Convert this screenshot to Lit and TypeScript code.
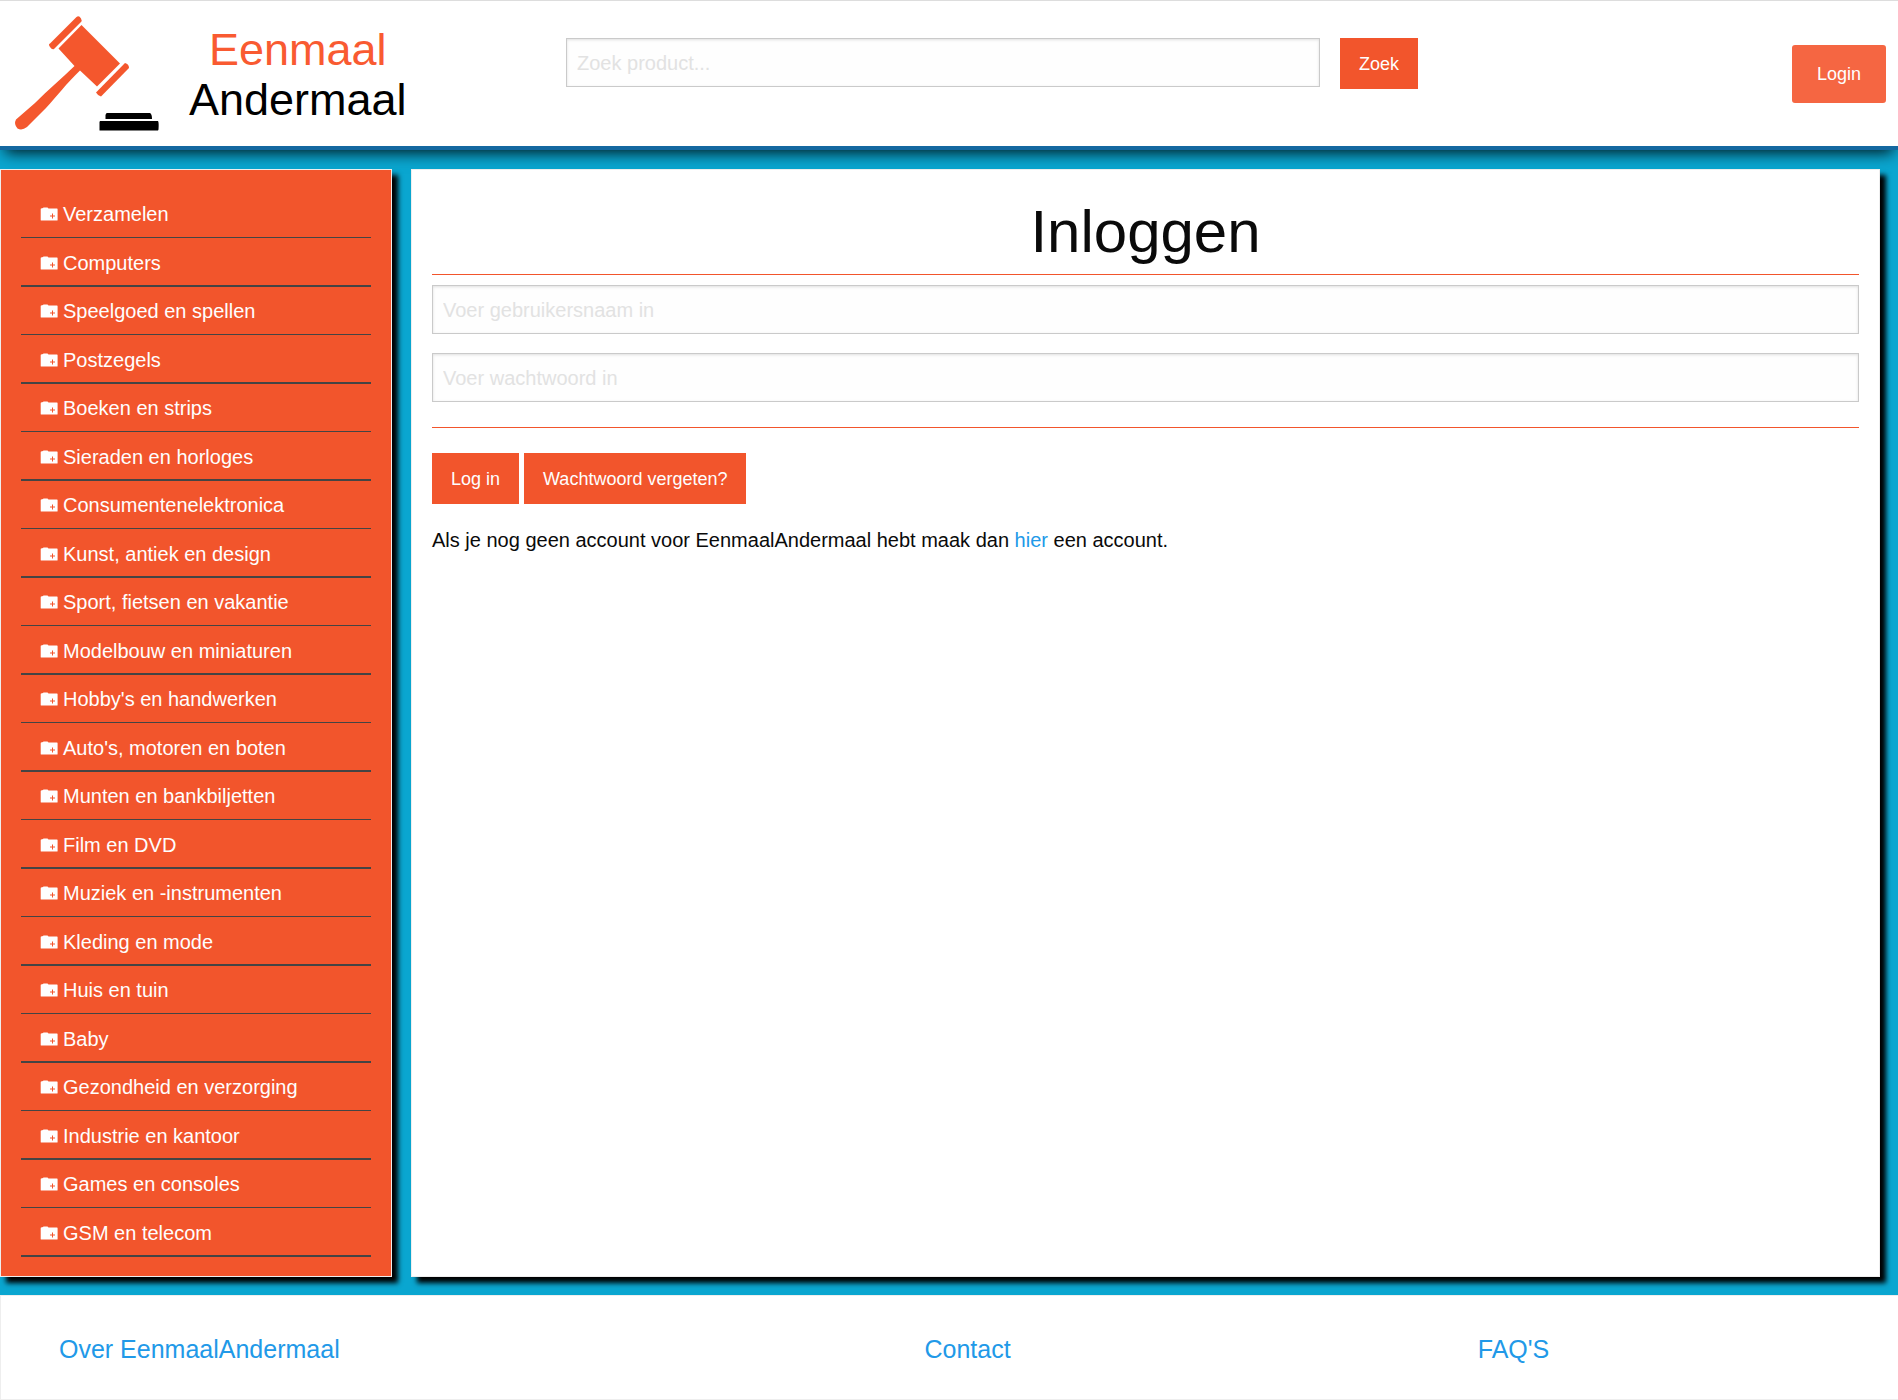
import { LitElement, html, css } from "lit";
import { customElement } from "lit/decorators.js";

const categories = [
  "Verzamelen", "Computers", "Speelgoed en spellen", "Postzegels", "Boeken en strips",
  "Sieraden en horloges", "Consumentenelektronica", "Kunst, antiek en design",
  "Sport, fietsen en vakantie", "Modelbouw en miniaturen", "Hobby's en handwerken",
  "Auto's, motoren en boten", "Munten en bankbiljetten", "Film en DVD",
  "Muziek en -instrumenten", "Kleding en mode", "Huis en tuin", "Baby",
  "Gezondheid en verzorging", "Industrie en kantoor", "Games en consoles", "GSM en telecom",
];

@customElement("app-root")
export class AppRoot extends LitElement {
  static styles = css`
    :host {
      display: flex;
      flex-direction: column;
      min-height: 100vh;
      box-sizing: border-box;
      background: #0aa6d0;
      color: #0a0a0a;
      font-family: "Liberation Sans", Arial, sans-serif;
      font-size: 20px;
      line-height: 30px;
    }
    * { box-sizing: border-box; }
    a { color: #2199e8; text-decoration: none; }

    .header {
      display: grid;
      grid-template-columns: 566fr 852fr 480fr;
      align-items: start;
      background: #fff;
      border-top: 1px solid #ddd;
      border-bottom: 4px solid #1468a0;
      box-shadow: 0 8px 14px -5px rgba(0, 0, 0, 0.85);
    }
    .brand { display: flex; align-items: flex-start; color: #000; }
    .logo { display: block; width: 165px; height: 145px; flex: none; }
    .brand-name {
      margin: 24px 0 0 24px;
      font-size: 45px;
      line-height: 50px;
      text-align: center;
    }
    .brand-name span { display: block; }
    .brand-name .accent { color: #f95a31; }
    .search { display: flex; align-items: flex-start; gap: 20px; padding-top: 37px; }
    .field {
      display: block;
      width: 100%;
      height: 49px;
      margin: 0;
      padding: 1px 10px 0;
      border: 1px solid #cacaca;
      border-radius: 0;
      background: #fefefe;
      box-shadow: inset 0 1px 3px rgba(10, 10, 10, 0.12);
      font: inherit;
      color: #0a0a0a;
    }
    .field::placeholder { color: #e2e2e2; opacity: 1; }
    .search .field { flex: 1; min-width: 0; }
    .button {
      display: block;
      flex: none;
      height: 51px;
      margin: 0;
      padding: 1px 19px 0;
      border: 0;
      background: #f2552c;
      color: #fefefe;
      font: inherit;
      font-size: 18px;
      cursor: pointer;
    }
    .login {
      justify-self: end;
      margin: 41px 9px 0 0;
      width: 100px;
      height: 64px;
      padding: 0;
      border: 3px solid #fff;
      border-radius: 6px;
      background: #f56642;
      color: #fefefe;
      font: inherit;
      font-size: 18px;
      cursor: pointer;
    }

    .body {
      flex: 1;
      display: grid;
      grid-template-columns: 392fr 1469fr;
      gap: 19px;
      padding: 19px 18px 18px 0;
    }
    .panel {
      border: 1px solid #eee;
      box-shadow: 6px 6px 5px #000;
    }
    .sidebar { background: #f2552c; padding: 20px 20px 19px; }
    .categories { list-style: none; margin: 0; padding: 0; }
    .category { border-bottom: 1px solid #444; }
    .category:nth-child(even) { border-bottom-width: 2px; }
    .category a {
      display: flex;
      align-items: center;
      gap: 5px;
      height: 47px;
      padding-left: 19px;
      color: #fefefe;
    }
    .category:nth-child(even) a { padding-top: 2px; }
    .folder { width: 18px; height: 14px; flex: none; }

    .main { background: #fff; padding: 20px; }
    .title {
      margin: 0;
      padding-top: 6px;
      height: 85px;
      border-bottom: 1px solid #f2552c;
      font-size: 60px;
      line-height: 72px;
      font-weight: normal;
      text-align: center;
    }
    .fields {
      display: grid;
      gap: 19px;
      padding: 10px 0 25px;
      border-bottom: 1px solid #f2552c;
    }
    .actions { display: flex; gap: 5px; margin-top: 25px; }
    .hint { margin: 21px 0 0; }

    .footer {
      display: grid;
      grid-template-columns: 865fr 553fr 420fr;
      align-items: center;
      height: 105px;
      padding: 2px 0 0 58px;
      background: #fff;
      border: 1px solid #eee;
      border-right: 0;
      font-size: 25px;
    }
  `;

  private folderIcon() {
    return html`<svg class="folder" viewBox="0 0 18 14" aria-hidden="true">
      <path fill="#fefefe" fill-rule="evenodd" d="M1 1.5 3 1 3.500 0.500H7.500L8.500 1.500H17Q17.600 1.500 17.600 2.200V13Q17.600 13.600 17 13.600H1.400Q0.700 13.600 0.700 13V2Z M12 6.500V8.500H10V9.500H12V11.500H13V9.500H15V8.500H13V6.500Z"/>
    </svg>`;
  }

  render() {
    return html`
      <header class="header">
        <a class="brand" href="#">
          <svg class="logo" viewBox="0 0 165 145" aria-hidden="true">
            <g fill="#f4572d">
              <path d="M81.500 24 120 62.500 97 85.500 80 69.500C66 83 58 94 46 107L27 126Q22 130 17.500 127.500Q13.500 123 16 118.500L35 102C48 89 61 78 74.500 65L58.500 47.500Z"/>
              <path d="M76.500 16Q79 14 81 17.500Q82.500 19.500 80.500 21.500L54 48Q52 49 50 46T50 42.500Z"/>
              <path d="M125 62Q129 63 129 67L101 95.500Q98 95 96 91.500Z"/>
            </g>
            <path d="M107 112H150Q152 113 152 118H105.500V114Q106 112 107 112ZM100 120H158Q159 121 158.500 128.500L158 129.500H99.500V121Z"/>
          </svg>
          <span class="brand-name"><span class="accent">Eenmaal</span><span>Andermaal</span></span>
        </a>
        <form class="search" role="search" @submit=${(e: Event) => e.preventDefault()}>
          <input class="field" id="search" type="text" aria-label="Zoek product" placeholder="Zoek product..." />
          <button class="button" type="submit">Zoek</button>
        </form>
        <button class="login" type="button">Login</button>
      </header>
      <div class="body">
        <nav class="panel sidebar">
          <ul class="categories">
            ${categories.map((c) => html`<li class="category"><a href="#">${this.folderIcon()}<span>${c}</span></a></li>`)}
          </ul>
        </nav>
        <main class="panel main">
          <h1 class="title">Inloggen</h1>
          <form @submit=${(e: Event) => e.preventDefault()}>
            <div class="fields">
              <input class="field" id="user" type="text" aria-label="Gebruikersnaam" placeholder="Voer gebruikersnaam in" />
              <input class="field" id="pass" type="password" aria-label="Wachtwoord" placeholder="Voer wachtwoord in" />
            </div>
            <div class="actions">
              <button class="button" type="submit">Log in</button>
              <button class="button" type="button">Wachtwoord vergeten?</button>
            </div>
          </form>
          <p class="hint">Als je nog geen account voor EenmaalAndermaal hebt maak dan <a href="#">hier</a> een account.</p>
        </main>
      </div>
      <footer class="footer">
        <a href="#">Over EenmaalAndermaal</a>
        <a href="#">Contact</a>
        <a href="#">FAQ'S</a>
      </footer>
    `;
  }
}
